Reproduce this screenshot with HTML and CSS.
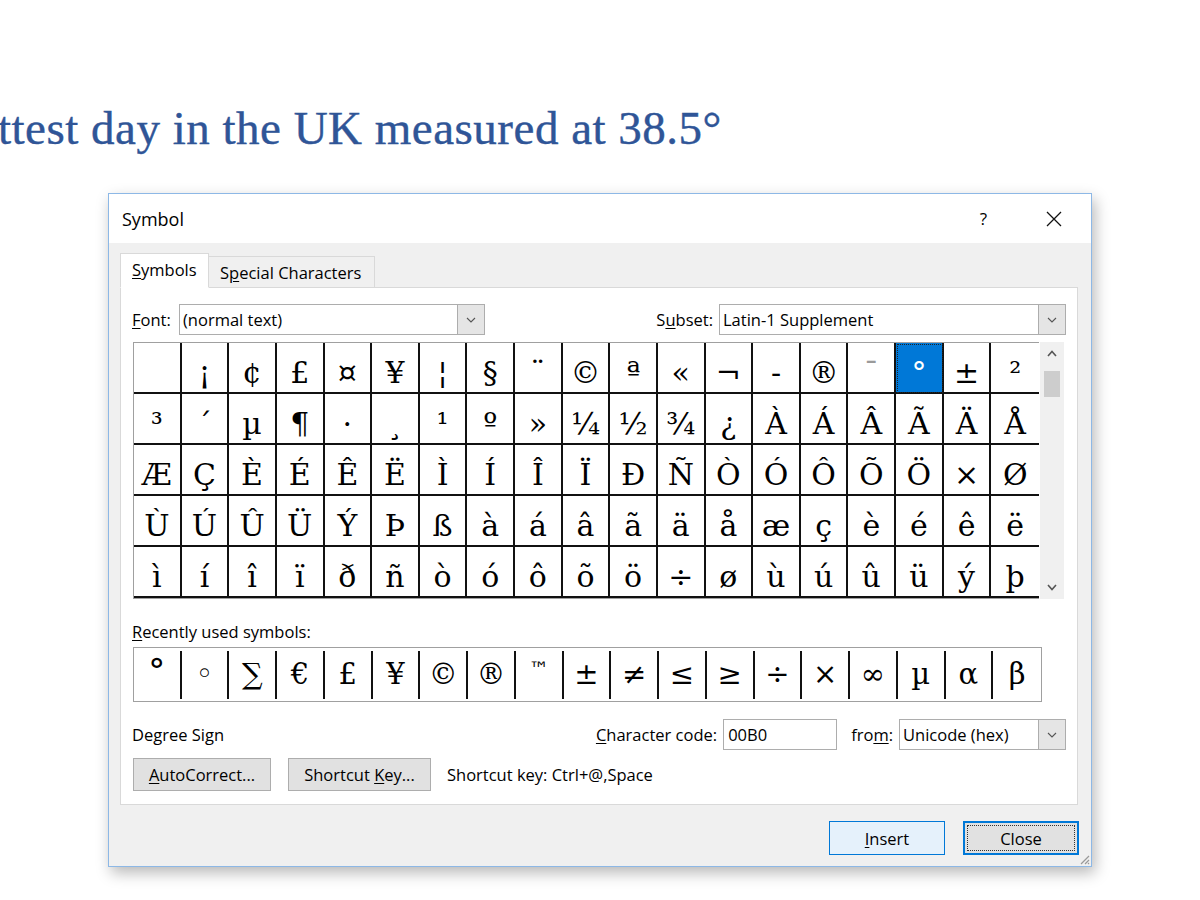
FILE: index.html
```html
<!DOCTYPE html>
<html lang="en">
<head>
<meta charset="utf-8">
<title>Symbol</title>
<link rel="stylesheet" href="styles.css">
</head>
<body>
<h1 class="headline">ttest day in the UK measured at 38.5°</h1>

<div class="dialog">
  <div class="titlebar">
    <span class="title">Symbol</span>
    <span class="help">?</span>
    <svg class="xicon" width="16" height="16" viewBox="0 0 16 16"><path d="M1 1 L15 15 M15 1 L1 15" stroke="#111" stroke-width="1.3" fill="none"/></svg>
  </div>

  <div class="dbody">
    <div class="tabs">
      <div class="tab active"><span><u>S</u>ymbols</span></div>
      <div class="tab inactive"><span>S<u>p</u>ecial Characters</span></div>
    </div>

    <div class="panel">
      <div class="fontrow">
        <span class="lbl lbl-font"><u>F</u>ont:</span>
        <div class="select sel-font"><span class="val">(normal text)</span><span class="dd"><svg width="10" height="6" viewBox="0 0 10 6"><path d="M1 1 L5 5 L9 1" stroke="#555" stroke-width="1.1" fill="none"/></svg></span></div>
        <span class="grow"></span>
        <span class="lbl lbl-subset">S<u>u</u>bset:</span>
        <div class="select sel-subset"><span class="val">Latin-1 Supplement</span><span class="dd"><svg width="10" height="6" viewBox="0 0 10 6"><path d="M1 1 L5 5 L9 1" stroke="#555" stroke-width="1.1" fill="none"/></svg></span></div>
      </div>

      <div class="gridwrap">
        <div class="grid">
          <span class="c">&nbsp;</span><span class="c">¡</span><span class="c">¢</span><span class="c">£</span><span class="c">¤</span><span class="c">¥</span><span class="c">¦</span><span class="c">§</span><span class="c">¨</span><span class="c">©</span><span class="c">ª</span><span class="c">«</span><span class="c">¬</span><span class="c">-</span><span class="c">®</span><span class="c light">¯</span><span class="c sel">°</span><span class="c">±</span><span class="c last">²</span>
          <span class="c">³</span><span class="c">´</span><span class="c">µ</span><span class="c">¶</span><span class="c">·</span><span class="c">¸</span><span class="c">¹</span><span class="c">º</span><span class="c">»</span><span class="c">¼</span><span class="c">½</span><span class="c">¾</span><span class="c">¿</span><span class="c">À</span><span class="c">Á</span><span class="c">Â</span><span class="c">Ã</span><span class="c">Ä</span><span class="c last">Å</span>
          <span class="c">Æ</span><span class="c">Ç</span><span class="c">È</span><span class="c">É</span><span class="c">Ê</span><span class="c">Ë</span><span class="c">Ì</span><span class="c">Í</span><span class="c">Î</span><span class="c">Ï</span><span class="c">Ð</span><span class="c">Ñ</span><span class="c">Ò</span><span class="c">Ó</span><span class="c">Ô</span><span class="c">Õ</span><span class="c">Ö</span><span class="c">×</span><span class="c last">Ø</span>
          <span class="c">Ù</span><span class="c">Ú</span><span class="c">Û</span><span class="c">Ü</span><span class="c">Ý</span><span class="c">Þ</span><span class="c">ß</span><span class="c">à</span><span class="c">á</span><span class="c">â</span><span class="c">ã</span><span class="c">ä</span><span class="c">å</span><span class="c">æ</span><span class="c">ç</span><span class="c">è</span><span class="c">é</span><span class="c">ê</span><span class="c last">ë</span>
          <span class="c">ì</span><span class="c">í</span><span class="c">î</span><span class="c">ï</span><span class="c">ð</span><span class="c">ñ</span><span class="c">ò</span><span class="c">ó</span><span class="c">ô</span><span class="c">õ</span><span class="c">ö</span><span class="c">÷</span><span class="c">ø</span><span class="c">ù</span><span class="c">ú</span><span class="c">û</span><span class="c">ü</span><span class="c">ý</span><span class="c last">þ</span>
        </div>
        <div class="scrollbar">
          <svg class="arrow" width="10" height="7" viewBox="0 0 10 7"><path d="M1 6 L5 1.5 L9 6" stroke="#555" stroke-width="1.6" fill="none"/></svg>
          <div class="thumb"></div>
          <span class="grow"></span>
          <svg class="arrow" width="10" height="7" viewBox="0 0 10 7"><path d="M1 1 L5 5.5 L9 1" stroke="#555" stroke-width="1.6" fill="none"/></svg>
        </div>
      </div>

      <div class="recent-label"><u>R</u>ecently used symbols:</div>
      <div class="recent">
        <span class="r deg">°</span><span class="r ring">◦</span><span class="r">∑</span><span class="r">€</span><span class="r">£</span><span class="r">¥</span><span class="r">©</span><span class="r">®</span><span class="r tm">™</span><span class="r">±</span><span class="r">≠</span><span class="r">≤</span><span class="r">≥</span><span class="r">÷</span><span class="r">×</span><span class="r">∞</span><span class="r">µ</span><span class="r">α</span><span class="r last">β</span>
      </div>

      <div class="inforow">
        <span class="desc">Degree Sign</span>
        <span class="lbl"><u>C</u>haracter code:</span>
        <div class="input">00B0</div>
        <span class="lbl lbl-from">fro<u>m</u>:</span>
        <div class="select sel-from"><span class="val">Unicode (hex)</span><span class="dd"><svg width="10" height="6" viewBox="0 0 10 6"><path d="M1 1 L5 5 L9 1" stroke="#555" stroke-width="1.1" fill="none"/></svg></span></div>
      </div>

      <div class="btnrow">
        <div class="btn btn-auto"><span><u>A</u>utoCorrect...</span></div>
        <div class="btn btn-key"><span>Shortcut <u>K</u>ey...</span></div>
        <span class="shortcut">Shortcut key: Ctrl+@,Space</span>
      </div>
    </div>

    <div class="footer">
      <div class="btn btn-insert"><span><u>I</u>nsert</span></div>
      <div class="btn btn-close"><span class="focus">Close</span></div>
    </div>
  </div>

  <svg class="grip" width="12" height="12" viewBox="0 0 12 12"><path d="M11 3 L3 11 M11 7 L7 11 M11 10 L10 11" stroke="#999" stroke-width="1.2" fill="none"/></svg>
</div>
</body>
</html>
```

FILE: styles.css
```css
* { box-sizing: border-box; }
html, body { margin: 0; padding: 0; background: #fff; }
body {
  width: 1200px;
  height: 900px;
  overflow: hidden;
  font-family: "Open Sans", "Noto Sans", "DejaVu Sans", sans-serif;
  font-size: 16.5px;
  color: #000;
}
u { text-decoration: underline; text-underline-offset: 2px; text-decoration-thickness: 1px; }

.headline {
  margin: 0;
  padding-top: 102px;
  height: 154px;
  font-family: "Liberation Serif", "Times New Roman", serif;
  font-weight: normal;
  font-size: 47px;
  line-height: 52px;
  letter-spacing: 0.5px;
  color: #2f5597;
  -webkit-text-stroke: 0.4px #2f5597;
  white-space: nowrap;
  text-indent: -2px;
}

.dialog {
  position: relative;
  margin: 39px 0 0 108px;
  width: 984px;
  height: 674px;
  border: 1px solid #8db8e6;
  background: #f0f0f0;
  box-shadow: 3px 6px 14px rgba(0,0,0,0.28);
  display: flex;
  flex-direction: column;
}

.titlebar {
  height: 49px;
  background: #fff;
  display: flex;
  align-items: center;
  padding: 0 29px 0 13px;
}
.title { flex: 1; font-size: 18px; }
.help { font-size: 17px; margin-right: 59px; }
.xicon { display: block; }

.dbody {
  flex: 1;
  display: flex;
  flex-direction: column;
  padding: 10px 13px 0 11px;
}

.tabs {
  display: flex;
  align-items: flex-end;
  height: 35px;
  margin-bottom: -1px;
  position: relative;
  z-index: 1;
}
.tab {
  height: 32px;
  padding: 0 0 0 11px;
  border: 1px solid #d9d9d9;
  background: #f0f0f0;
  display: flex;
  align-items: center;
}
.tab.active {
  width: 89px;
  height: 35px;
  background: #fff;
  border-bottom-color: #fff;
  padding-bottom: 3px;
}
.tab.inactive { width: 166px; border-left: none; }

.panel {
  height: 518px;
  background: #fff;
  border: 1px solid #d9d9d9;
  padding: 16px 11px 0 11px;
  display: flex;
  flex-direction: column;
}

.fontrow { display: flex; align-items: center; height: 31px; }
.lbl-font { width: 47px; }
.grow { flex: 1; }
.lbl-subset { margin-right: 6px; }

.select {
  height: 31px;
  border: 1px solid #adadad;
  background: #fff;
  display: flex;
  align-items: stretch;
}
.select .val { flex: 1; padding-left: 3px; display: flex; align-items: center; }
.select .dd {
  width: 27px;
  background: #e5e5e5;
  border-left: 1px solid #adadad;
  display: flex;
  align-items: center;
  justify-content: center;
}
.sel-font { width: 306px; }
.sel-subset { width: 347px; }
.sel-from { width: 167px; }

.gridwrap {
  display: flex;
  margin: 7px 0 0 1px;
  height: 257px;
}
.grid {
  width: 906px;
  border: 1px solid #a0a0a0;
  border-right: none;
  display: grid;
  grid-template-columns: repeat(19, 1fr);
  grid-auto-rows: 51px;
  font-family: "DejaVu Serif", "Liberation Serif", serif;
  font-size: 30px;
}
.c {
  border-right: 2px solid #111;
  border-bottom: 2px solid #111;
  text-align: center;
  padding-top: 12px;
  line-height: 36px;
  overflow: hidden;
}
.c.last { border-right: none; }
.c.light { color: #9a9a9a; }
.c.sel {
  background: #0078d7;
  color: #fff;
  outline: 1px dotted #222;
  outline-offset: -2px;
}

.scrollbar {
  width: 24px;
  margin-left: 1px;
  background: #f0f0f0;
  display: flex;
  flex-direction: column;
  align-items: center;
  padding: 8px 0 8px;
}
.arrow { display: block; }
.thumb { width: 16px; height: 26px; background: #cdcdcd; margin-top: 14px; }

.recent-label { margin-top: 23px; height: 20px; line-height: 20px; margin-bottom: 5px; }

.recent {
  width: 909px;
  height: 55px;
  margin-left: 1px;
  border: 1px solid #a0a0a0;
  padding: 3px 0 2px;
  display: grid;
  grid-template-columns: repeat(19, 1fr);
  font-family: "DejaVu Serif", "Liberation Serif", serif;
  font-size: 29px;
}
.r {
  border-right: 2px solid #111;
  text-align: center;
  padding-top: 5px;
  line-height: 36px;
  overflow: hidden;
}
.r.last { border-right: none; }
.r.deg { font-size: 34px; padding-top: 2px; }
.r.ring { font-family: "DejaVu Sans", sans-serif; font-size: 30px; }
.r.tm { font-size: 20px; padding-top: 0; font-family: "DejaVu Sans", sans-serif; }

.inforow { display: flex; align-items: center; height: 31px; margin-top: 17px; }
.desc { flex: 1; }
.input {
  width: 114px;
  height: 31px;
  border: 1px solid #adadad;
  background: #fff;
  margin-left: 6px;
  padding-left: 4px;
  display: flex;
  align-items: center;
}
.lbl-from { margin-left: 14px; margin-right: 6px; }

.btnrow { display: flex; align-items: center; margin-top: 8px; height: 33px; }
.btn {
  height: 33px;
  background: #e1e1e1;
  border: 1px solid #adadad;
  display: flex;
  align-items: center;
  justify-content: center;
}
.btn-auto { width: 138px; margin-left: 1px; }
.btn-key { width: 143px; margin-left: 17px; }
.shortcut { margin-left: 16px; }

.footer {
  display: flex;
  justify-content: flex-end;
  gap: 18px;
  padding-top: 16px;
  margin-right: -1px;
}
.btn-insert {
  width: 116px;
  height: 34px;
  background: #e5f1fb;
  border: 1px solid #0078d7;
}
.btn-close {
  width: 116px;
  height: 34px;
  border: 2px solid #0078d7;
  padding: 2px;
}
.btn-close .focus {
  width: 100%;
  height: 100%;
  border: 1px dotted #333;
  display: flex;
  align-items: center;
  justify-content: center;
}

.grip { position: absolute; right: 1px; bottom: 1px; }
```
